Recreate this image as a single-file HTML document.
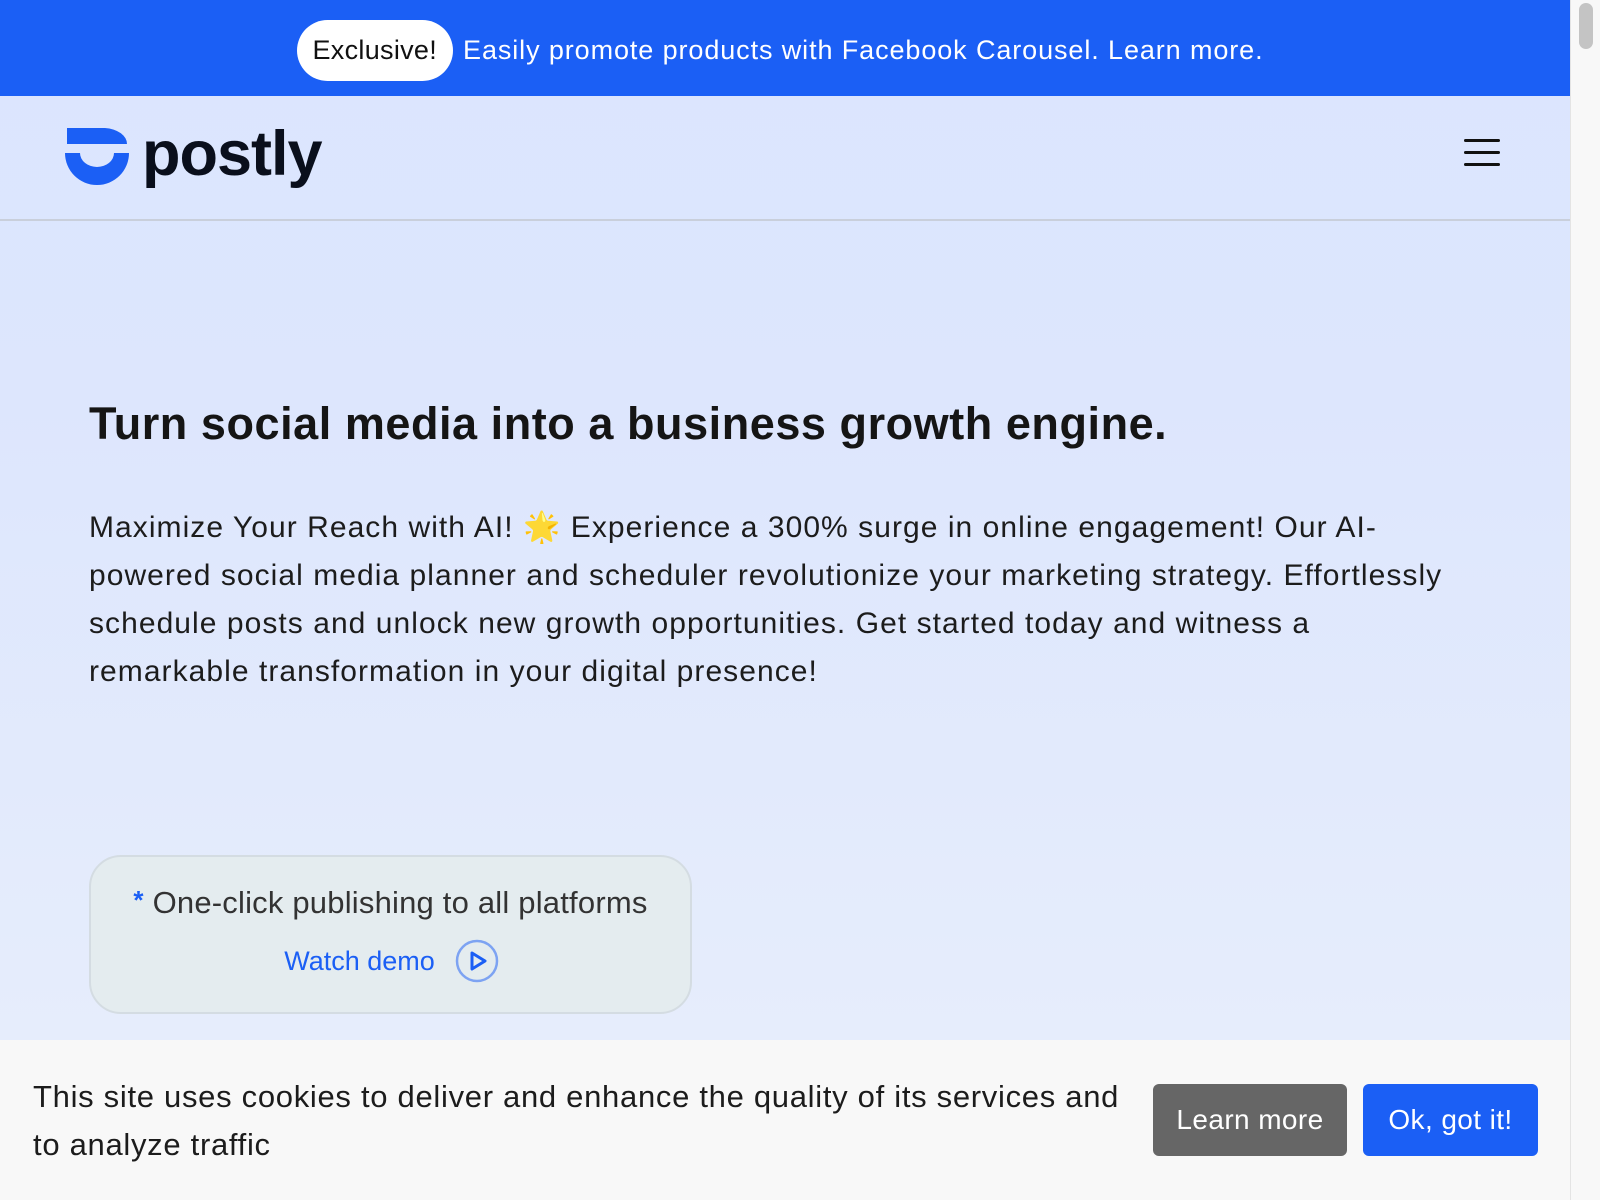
<!DOCTYPE html>
<html><head><meta charset="utf-8"><style>
*{margin:0;padding:0;box-sizing:border-box}
html,body{width:1600px;height:1200px;overflow:hidden;font-family:"Liberation Sans",sans-serif}
body{background:#f8f8f8;position:relative}
#page{position:absolute;left:0;top:0;width:1570px;height:1200px;background:linear-gradient(#dbe5fe 0px,#dde6fd 400px,#e6edfc 1040px)}
.banner{height:96px;background:#1b5ff5;color:#fff;display:flex;align-items:center;justify-content:center;font-size:27px;letter-spacing:0.9px;padding-top:4px}
.pill{background:#fff;color:#111;border-radius:34px;padding:15px 16px;margin-right:10px;margin-left:-10px;letter-spacing:0.3px}
.header{height:125px;border-bottom:2px solid #c9cfdb;position:relative}
.logo{position:absolute;left:65px;top:30px;display:flex;align-items:center}
.logo span{font-size:63px;font-weight:bold;color:#0a0f1c;margin-left:13px;letter-spacing:-1px;margin-top:-8px}
.ham{position:absolute;left:1464px;top:43px;width:36px}
.ham i{display:block;height:3px;background:#111;margin-bottom:9px;border-radius:2px}
h1{position:absolute;left:89px;top:398px;font-size:45px;color:#151515;letter-spacing:0.55px;white-space:nowrap}
p.lead{position:absolute;left:89px;top:504px;font-size:30px;line-height:48px;color:#1c1c1c;letter-spacing:1.05px;white-space:nowrap}
.box{position:absolute;left:89px;top:855px;width:603px;height:159px;border-radius:32px;background:#e4ecef;border:2px solid #d4dce2;text-align:center}
.box .t{font-size:31px;color:#333;margin-top:28px;letter-spacing:0.2px}
.box .t b{color:#1b5ff5;font-weight:bold;font-size:26px;vertical-align:4px}
.box .w{font-size:27px;color:#1b5ff5;margin-top:18px;display:flex;justify-content:center;align-items:center;gap:20px;padding-left:2px}
.cookie{position:absolute;left:0;top:1040px;width:1570px;height:160px;background:#f8f8f8}
.cookie .txt{position:absolute;left:33px;top:33px;font-size:31px;line-height:48px;color:#1c1c1c;letter-spacing:0.7px;white-space:nowrap}
.btn{position:absolute;top:44px;height:72px;border-radius:6px;color:#fff;font-size:28px;display:flex;align-items:center;justify-content:center;letter-spacing:0.4px}
.sb{position:absolute;left:1570px;top:0;width:30px;height:1200px;background:#f8f8f8;border-left:1px solid #e4e4e4}
.sb i{position:absolute;left:8px;top:3px;width:14px;height:46px;border-radius:7px;background:#c4c4c4}
</style></head><body>
<div id="page">
<div class="banner"><span class="pill">Exclusive!</span>Easily promote products with Facebook Carousel. Learn more.</div>
<div class="header">
<div class="logo"><svg width="64" height="60" viewBox="0 0 64 60"><path d="M2 0 H40 A24 16 0 0 1 62 16 H2 Z" fill="#1b5ff5"/><path d="M0 25 H15 A17 14 0 0 0 49 25 H64 A32 32 0 0 1 0 25 Z" fill="#1b5ff5"/></svg><span>postly</span></div>
<div class="ham"><i></i><i></i><i></i></div>
</div>
<h1>Turn social media into a business growth engine.</h1>
<p class="lead">Maximize Your Reach with AI! 🌟 Experience a 300% surge in online engagement! Our AI-<br>powered social media planner and scheduler revolutionize your marketing strategy. Effortlessly<br>schedule posts and unlock new growth opportunities. Get started today and witness a<br>remarkable transformation in your digital presence!</p>
<div class="box"><div class="t"><b>*</b> One-click publishing to all platforms</div>
<div class="w">Watch demo <svg width="44" height="44" viewBox="0 0 44 44"><circle cx="22" cy="22" r="20" fill="none" stroke="#7da3f2" stroke-width="2.5"/><path d="M17 14 L30 22 L17 30 Z" fill="none" stroke="#1b5ff5" stroke-width="3" stroke-linejoin="round"/></svg></div></div>
<div class="cookie"><div class="txt">This site uses cookies to deliver and enhance the quality of its services and<br>to analyze traffic</div>
<div class="btn" style="left:1153px;width:194px;background:#666">Learn more</div>
<div class="btn" style="left:1363px;width:175px;background:#1b5ff5">Ok, got it!</div></div>
</div>
<div class="sb"><i></i></div>
</body></html>
